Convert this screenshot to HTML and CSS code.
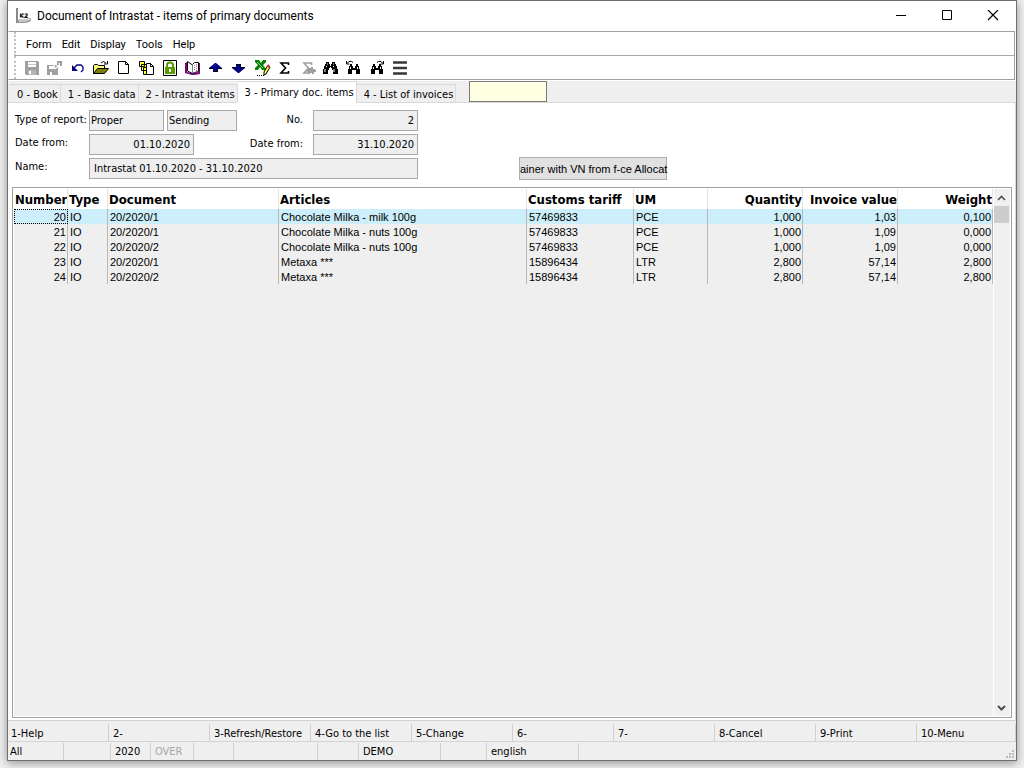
FILE: index.html
```html
<!DOCTYPE html>
<html lang="en">
<head>
<meta charset="utf-8">
<title>Document of Intrastat - items of primary documents</title>
<link rel="stylesheet" href="styles.css">
</head>
<body>
<svg class="defs" aria-hidden="true">
  <symbol id="bino" viewBox="0 0 15 12">
    <path d="M3 0h3v2h1v2h1V2h1V0h3v2h1v2h1v3h1v5h-5V8H9V6H6v2H5v4H0V7h1V4h1V2h1z" fill="#000"/>
    <path d="M4 2h1M10 2h1M3 4.500h1M10 4.500h1M2 7v3M11 7v3M7 5.500h1" stroke="#fff" fill="none"/>
  </symbol>
  <symbol id="bino-small" viewBox="0 0 12 10">
    <path d="M2 0h2v2h1v2h2V2h1V0h2v2h1v3h1v5H8V6H4v4H0V5h1V2h1z" fill="#000"/>
    <path d="M2.500 3v2M9.500 3v2" stroke="#fff" fill="none"/>
  </symbol>
</svg>
<div class="window">
  <header class="titlebar">
    <svg class="logo" viewBox="0 0 16 16"><path d="M1 0v15" stroke="#888" stroke-width="2"/><path d="M1 15V12q7 0 14-2v3q-3 2-8 2z" fill="#999"/><path d="M3 11h12v1q-6 2-12 2z" fill="#ccc"/><path d="M4 5h8v5H4z" fill="#e4e4e4"/><path d="M4.500 5.500v4M7.500 5.500L5 7.500l2.500 2M9 6h2v1.500L9 9.500h3" stroke="#222" stroke-width="1.200" fill="none"/></svg>
    <h1 class="title">Document of Intrastat - items of primary documents</h1>
    <button class="win-btn" aria-label="Minimize"><svg viewBox="0 0 12 12"><path d="M1 5.500h10" stroke="#000"/></svg></button>
    <button class="win-btn" aria-label="Maximize"><svg viewBox="0 0 12 12"><path d="M1.500.500h9v9h-9z" stroke="#000" fill="none"/></svg></button>
    <button class="win-btn" aria-label="Close"><svg viewBox="0 0 12 12"><path d="M1 0l10 10M11 0L1 10" stroke="#000" stroke-width="1.200"/></svg></button>
  </header>

  <div class="bars">
    <nav class="menubar">
      <button>Form</button><button>Edit</button><button>Display</button><button>Tools</button><button>Help</button>
    </nav>
    <div class="toolbar" role="toolbar" aria-label="Tools">
      <button aria-label="Save"><svg viewBox="0 0 17 16"><path d="M2 1h13l1 1v13H3l-1-1z" fill="#a0a0a0"/><path d="M5 2h8v5H5z" fill="#fff"/><path d="M5 4.500h8" stroke="#c8c8c8"/><path d="M5 10h8v5H5z" fill="#b4b4b4"/><path d="M6 11h2v3H6z" fill="#fff"/></svg></button>
      <button aria-label="Save and close"><svg viewBox="0 0 17 16"><path d="M1 5h11v10H1z" fill="#a0a0a0"/><path d="M3 6h6v3H3zM4 12h2v3H4z" fill="#fff"/><path d="M8 8l6-6" stroke="#fff" stroke-width="4"/><path d="M9 7l5-5" stroke="#a0a0a0" stroke-width="2" stroke-dasharray="2 1"/><path d="M11 1h5v5h-2V3h-3z" fill="#a0a0a0"/></svg></button>
      <button aria-label="Undo"><svg viewBox="0 0 17 16"><path d="M3 5v6h6z" fill="#000080"/><path d="M5 8l3-3h4l2 2v3l-2 2" stroke="#000080" stroke-width="1.300" fill="none"/></svg></button>
      <button aria-label="Open"><svg viewBox="0 0 17 16"><path d="M1.500 13.500v-8l1-1h3l1 1h6v3" fill="#ffff80" stroke="#000"/><path d="M1.500 13.500l4-5h11l-4 5z" fill="#808000" stroke="#000"/><path d="M9 3q2-3 5 0M15.500 1v3H12" stroke="#000" fill="none"/></svg></button>
      <button aria-label="New"><svg viewBox="0 0 17 16"><path d="M3.500 1.500h7l3 3v9h-10z" fill="#fff" stroke="#000"/><path d="M10.500 1.500v3h3" stroke="#000" fill="none"/></svg></button>
      <button aria-label="Copy"><svg viewBox="0 0 17 16"><path d="M1.500 1.500h5v5h-5zM3.500 4.500h5v6h-5zM5.500 7.500h4v7h-4z" fill="#ffff30" stroke="#000"/><path d="M8.500 3.500h4l3 3v8h-7z" fill="#fff" stroke="#000"/><path d="M12.500 3.500v3h3" stroke="#000" fill="none"/></svg></button>
      <button aria-label="Lock"><svg viewBox="0 0 17 16"><path d="M2.500.500h13v15h-13z" fill="#fff" stroke="#000"/><path d="M6 7V5q0-2.500 3-2.500T12 5v2" stroke="#5a9a00" stroke-width="2" fill="none"/><path d="M4 7h10v7H4z" fill="#5a9a00"/><path d="M8 9h2v3H8z" fill="#fff"/></svg></button>
      <button aria-label="Book"><svg viewBox="0 0 17 16"><path d="M1 3l2-1v10l5 1 1 1 1-1 5-1V3h1v11l-6 1H8l-7-2z" fill="#800080"/><path d="M3.500 1.500L8.500 5v8.500l-5-2.500z" fill="#fff" stroke="#000"/><path d="M8.500 4.500l2-2h4v9l-4 1-2 1" fill="#fff" stroke="#000"/><path d="M10.500 5v6M12.500 4v7" stroke="#808080" stroke-dasharray="1 1"/></svg></button>
      <button aria-label="Previous"><svg viewBox="0 0 17 16"><path d="M8 3h1l6 5v1h-4v3H6V9H2V8z" fill="#000080"/><path d="M2 8.500h4M11 8.500h4M6 11.500h5" stroke="#000"/></svg></button>
      <button aria-label="Next"><svg viewBox="0 0 17 16"><path d="M6 4h5v3h4v1l-6 5H8L2 8V7h4z" fill="#000080"/><path d="M2 7.500h4M11 7.500h4M6 4.500h5" stroke="#000"/></svg></button>
      <button aria-label="Export to Excel"><svg viewBox="0 0 17 16"><path d="M2 0h4l2 3 2-3h3v2l-3 3 3 4v1H9L7 7 5 10H2V8l3-3-3-3z" fill="#008000"/><path d="M4 2l6 6" stroke="#8fd08f"/><path d="M15 5l2 2-4 7-2 1 0-3z" fill="#ffff30" stroke="#000"/><path d="M14.500 5l2 2" stroke="#d03030" stroke-width="2"/><path d="M4 15.500h8" stroke="#000" stroke-dasharray="1 1"/></svg></button>
      <button aria-label="Sum"><svg viewBox="0 0 17 16"><path d="M12.500 5V3H5l4.500 5L5 13h7.500v-2" stroke="#000" stroke-width="1.600" fill="none"/></svg></button>
      <button aria-label="Sum selected"><svg viewBox="0 0 17 16"><path d="M12.500 5V3H5l4.500 5L5 13h5" stroke="#a0a0a0" stroke-width="1.600" fill="none"/><path d="M9 8h3V7h2v2h2v1h1v2h-2v2h-2v-1h-2v1H9v-2H8v-2h1z" fill="#a0a0a0"/></svg></button>
      <button aria-label="Find"><svg viewBox="0 0 17 16"><use href="#bino" x="1" y="2" width="15" height="12"/></svg></button>
      <button aria-label="Find previous"><svg viewBox="0 0 17 16"><use href="#bino-small" x="3" y="4" width="12" height="10"/><path d="M1.500 1v3h3M2 3.500q3-4 6-1" stroke="#000" fill="none"/></svg></button>
      <button aria-label="Find next"><svg viewBox="0 0 17 16"><use href="#bino-small" x="3" y="4" width="12" height="10"/><path d="M15.500 1v3h-3M15 3.500q-3-4-6-1" stroke="#000" fill="none"/></svg></button>
      <button aria-label="Menu"><svg viewBox="0 0 17 16"><path d="M2 2.500h14M2 8h14M2 13.500h14" stroke="#383838" stroke-width="2.500"/></svg></button>
    </div>
  </div>

  <div class="tabs">
    <div class="tablist" role="tablist">
      <button role="tab">0 - Book</button><button role="tab">1 - Basic data</button><button role="tab">2 - Intrastat items</button><button role="tab" class="active" aria-selected="true">3 - Primary doc. items</button><button role="tab">4 - List of invoices</button>
    </div>
    <input class="quick" aria-label="Quick search">
  </div>

  <main class="page">
    <form class="form">
      <label for="kind">Type of report:</label>
      <div class="pair"><input id="kind" class="kind" value="Proper" readonly><input class="direction" aria-label="Direction" value="Sending" readonly></div>
      <label class="second" for="no">No.</label>
      <input id="no" class="num" value="2" readonly>
      <label class="first" for="from">Date from:</label>
      <div class="pair"><input id="from" class="num date" value="01.10.2020" readonly></div>
      <label class="second" for="to">Date from:</label>
      <input id="to" class="num" value="31.10.2020" readonly>
      <label class="first" for="name">Name:</label>
      <input id="name" class="name" value="Intrastat 01.10.2020 - 31.10.2020" readonly>
      <button type="button" class="action">ainer with VN from f-ce Allocat</button>
    </form>

    <div class="grid">
      <div class="grid-body">
        <table>
          <colgroup><col class="c-number"><col class="c-type"><col class="c-doc"><col><col class="c-tariff"><col class="c-um"><col class="c-qty"><col class="c-qty"><col class="c-qty"></colgroup>
          <thead><tr><th class="r">Number</th><th>Type</th><th>Document</th><th>Articles</th><th>Customs tariff</th><th>UM</th><th class="r">Quantity</th><th class="r">Invoice value</th><th class="r">Weight</th></tr></thead>
          <tbody>
            <tr class="selected"><td class="r focus">20</td><td>IO</td><td>20/2020/1</td><td>Chocolate Milka - milk 100g</td><td>57469833</td><td>PCE</td><td class="r">1,000</td><td class="r">1,03</td><td class="r">0,100</td></tr>
            <tr><td class="r">21</td><td>IO</td><td>20/2020/1</td><td>Chocolate Milka - nuts 100g</td><td>57469833</td><td>PCE</td><td class="r">1,000</td><td class="r">1,09</td><td class="r">0,000</td></tr>
            <tr><td class="r">22</td><td>IO</td><td>20/2020/2</td><td>Chocolate Milka - nuts 100g</td><td>57469833</td><td>PCE</td><td class="r">1,000</td><td class="r">1,09</td><td class="r">0,000</td></tr>
            <tr><td class="r">23</td><td>IO</td><td>20/2020/1</td><td>Metaxa ***</td><td>15896434</td><td>LTR</td><td class="r">2,800</td><td class="r">57,14</td><td class="r">2,800</td></tr>
            <tr><td class="r">24</td><td>IO</td><td>20/2020/2</td><td>Metaxa ***</td><td>15896434</td><td>LTR</td><td class="r">2,800</td><td class="r">57,14</td><td class="r">2,800</td></tr>
          </tbody>
        </table>
      </div>
      <div class="scroll">
        <button aria-label="Scroll up"><svg viewBox="0 0 9 9"><path d="M1 7l3.500-3.500L8 7" stroke="#505050" stroke-width="1.600" fill="none"/></svg></button>
        <div class="thumb"></div>
        <button aria-label="Scroll down"><svg viewBox="0 0 9 9"><path d="M1 3l3.500 3.500L8 3" stroke="#505050" stroke-width="2" fill="none"/></svg></button>
      </div>
    </div>
  </main>

  <div class="keys">
    <button>1-Help</button><button>2-</button><button>3-Refresh/Restore</button><button>4-Go to the list</button><button>5-Change</button><button>6-</button><button>7-</button><button>8-Cancel</button><button>9-Print</button><button>10-Menu</button>
  </div>
  <footer class="status">
    <span>All</span><span></span><span>2020</span><span class="off">OVER</span><span></span><span></span><span></span><span>DEMO</span><span></span><span>english</span>
    <svg class="grip" viewBox="0 0 8 8"><path d="M6 0h2v2H6zM3 3h2v2H3zM6 3h2v2H6zM0 6h2v2H0zM3 6h2v2H3zM6 6h2v2H6z" fill="#bcbcbc"/></svg>
  </footer>
</div>
</body>
</html>
```
FILE: styles.css
```css
* { box-sizing: border-box; }

body {
  margin: 0;
  height: 100vh;
  padding: 0 7px 7px;
  display: flex;
  background: #f0f0f0;
  font: 11px/14px "DejaVu Sans Condensed", "Noto Sans", sans-serif;
  color: #000;
}

button, input { font: inherit; color: inherit; border-radius: 0; margin: 0; }
button { background: none; border: 0; padding: 0; white-space: nowrap; }
svg { display: block; }
.defs { position: absolute; width: 0; height: 0; }

.window {
  flex: 1;
  min-width: 0;
  display: flex;
  flex-direction: column;
  background: #fff;
  border: 1px solid #707070;
  box-shadow: 0 2px 9px rgba(0, 0, 0, .4);
}

.titlebar { display: flex; align-items: center; height: 30px; padding-left: 8px; }
.logo { width: 16px; height: 16px; }
.title { flex: 1; margin: 0 0 0 5px; font: 12px/16px Roboto, "Noto Sans", sans-serif; }
.win-btn { width: 46px; height: 28px; display: grid; place-items: center; }
.win-btn svg { width: 12px; height: 12px; }

.bars { margin: 0 1px 0 0; border: 1px solid #a0a0a0; border-left-color: #fff; }
.menubar, .toolbar { display: flex; align-items: center; height: 24px; margin-left: 5px; border-left: 2px dotted #c0c0c0; }
.menubar { padding: 3px 0 0 10px; gap: 10px; border-bottom: 1px solid #a8a8a8; font: 11px/14px Roboto, "Liberation Sans", sans-serif; }
.toolbar { height: 23px; padding-left: 4px; }
.toolbar button { width: 23px; padding: 0 3px; }
.toolbar svg { width: 17px; height: 16px; overflow: visible; }

.tabs {
  display: flex;
  align-items: flex-end;
  height: 22px;
  margin-top: 1px;
  padding-left: 2px;
  background: #efefef;
  box-shadow: inset 0 -1px #d9d9d9;
}
.tablist { display: flex; align-items: flex-end; }
.tablist button { height: 19px; padding: 3px 2px 0 7px; border: 1px solid #d9d9d9; border-left: 0; background: #efefef; }
.tablist .active { height: 22px; padding: 1px 2px 1px 7px; background: #fff; border-bottom: 0; }
.quick { width: 78px; height: 21px; margin: 0 0 1px 13px; border: 1px solid #7a7a7a; background: #ffffe1; }

.page { flex: 1; min-height: 0; display: flex; flex-direction: column; padding: 7px 3px 2px 4px; border-right: 1px solid #d9d9d9; }

.form { display: grid; grid-template-columns: 74px 148px 76px 105px 101px 148px; row-gap: 3px; padding-left: 3px; }
.form > label { line-height: 20px; white-space: nowrap; }
.form .first { grid-column: 1; line-height: 18px; }
.form .second { padding-right: 10px; text-align: right; }
.form input { min-width: 0; height: 21px; border: 1px solid #a9a9ad; background: #efefef; padding: 0 3px 1px 1px; }
.form .num { text-align: right; }
.pair { display: flex; gap: 3px; }
.kind { width: 75px; }
.direction { width: 70px; }
.date { width: 105px; }
.form .name { grid-column: 2 / 5; padding-left: 4px; }
.action { grid-column: 6; height: 23px; margin-top: -1px; border: 1px solid #adadad; background: #e1e1e1; font-family: "Liberation Sans", sans-serif; }

.grid { flex: 1; min-height: 0; display: flex; margin-top: 7px; border: 1px solid #a0a0a0; padding: 1px; }
.grid-body { flex: 1; min-width: 0; background: #efefef; }
table { width: 100%; table-layout: fixed; border-collapse: separate; border-spacing: 0; }
.c-number { width: 54px; }
.c-type { width: 40px; }
.c-doc { width: 171px; }
.c-tariff { width: 107px; }
.c-um { width: 74px; }
.c-qty { width: 95px; }
th, td { padding: 0 0 0 2px; text-align: left; white-space: nowrap; overflow: hidden; }
th { height: 20px; padding: 1px 0 0 1px; background: #fff; border-right: 1px solid #e4e4e4; font: bold 13px/19px "DejaVu Sans Condensed", sans-serif; }
td { height: 15px; padding-top: 1px; border-right: 1px solid #b8b8b8; font: 11px/14px "Liberation Sans", sans-serif; }
.r { text-align: right; padding-right: 0; }
td.r { padding-right: 1px; }
.selected td { background: #cceffb; }
.focus { outline: 1px dotted #000; outline-offset: -1px; }

.scroll { width: 17px; padding-right: 1px; display: flex; flex-direction: column; align-items: stretch; background: #f0f0f0; border-left: 1px solid #fff; }
.scroll button { height: 17px; display: grid; place-items: center; }
.scroll svg { width: 9px; height: 9px; }
.thumb { height: 17px; background: #cdcdcd; margin-bottom: auto; }

.keys { display: grid; grid-template-columns: repeat(9, 101fr) 99fr; height: 22px; padding-top: 3px; background: #efefef; border-top: 1px solid #d0d0d0; border-bottom: 1px solid #d4d4d4; }
.keys button { text-align: left; padding: 3px 0 0 4px; border-right: 1px solid #d0d0d0; margin-bottom: 1px; }
.keys button:first-child { padding-left: 3px; }
.status { display: grid; grid-template-columns: 56px 47px 40px 43px 40px 84px 41px 82px 46px 92px 1fr; height: 18px; padding-top: 1px; background: #efefef; }
.status span { padding: 2px 0 0 4px; border-right: 1px solid #d0d0d0; white-space: nowrap; }
.status span:first-child { padding-left: 2px; }
.status .off { color: #a8a8a8; }
.grip { width: 8px; height: 8px; justify-self: end; align-self: end; margin: 0 2px 2px 0; }
```
